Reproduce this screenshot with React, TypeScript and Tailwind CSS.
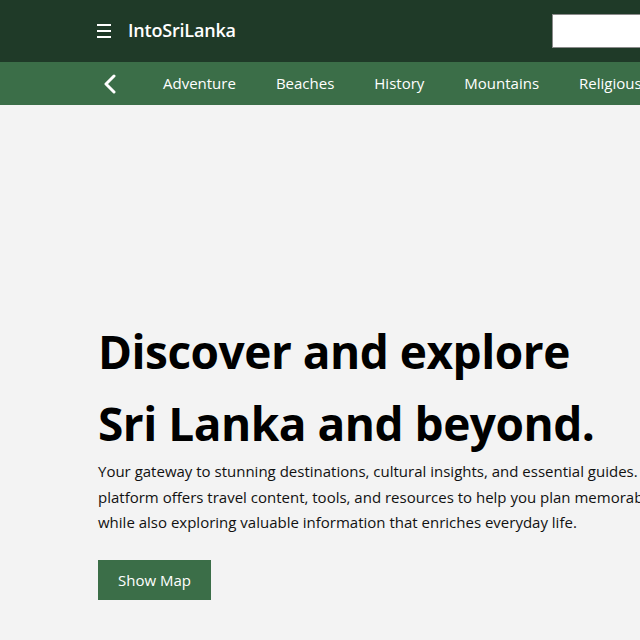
import React from 'react';

const categories = ['Adventure', 'Beaches', 'History', 'Mountains', 'Religious', 'Wildlife'];

export default function App() {
    return (
        <div className="w-[640px] h-[640px] overflow-hidden bg-[#f3f3f3] font-['Open_Sans',sans-serif]">
            <div className="w-[900px]">
                {/* Top bar */}
                <header className="h-[62px] bg-[#1f3a28] flex items-center pl-[97px]">
                    <button className="flex flex-col gap-[4px] w-[14px]">
                        <span className="block h-[2px] bg-white" />
                        <span className="block h-[2px] bg-white" />
                        <span className="block h-[2px] bg-white" />
                    </button>
                    <span className="ml-[17px] -mt-[2px] text-white text-[18px] font-semibold tracking-[-0.2px]">IntoSriLanka</span>
                    <input className="ml-[316px] h-[34px] w-[300px] bg-white border border-[#8a8a8a]" />
                </header>

                {/* Category nav */}
                <nav className="h-[43px] bg-[#3b6e48] flex items-center pl-[103px] text-white text-[15px]">
                    <svg width="14" height="20" viewBox="0 0 14 20" fill="none" className="mr-[46px]">
                        <path d="M11 2 L3 10 L11 18" stroke="white" strokeWidth="3" strokeLinecap="round" strokeLinejoin="round" />
                    </svg>
                    <div className="flex gap-[40px]">
                        {categories.map((c) => (
                            <span key={c}>{c}</span>
                        ))}
                    </div>
                </nav>

                {/* Hero */}
                <section className="pl-[98px] pt-[210px]">
                    <h1 className="text-[46px] leading-[72px] font-bold text-black tracking-[-0.5px]">
                        Discover and explore
                        <br />
                        Sri Lanka and beyond.
                    </h1>
                    <p className="whitespace-nowrap text-[15px] leading-[25.6px] text-[#111]">
                        Your gateway to stunning destinations, cultural insights, and essential guides. Our
                        <br />
                        platform offers travel content, tools, and resources to help you plan memorable journeys,
                        <br />
                        while also exploring valuable information that enriches everyday life.
                    </p>
                    <button className="mt-[24px] h-[40px] px-[20px] bg-[#3b6e48] text-white text-[15px]">
                        Show Map
                    </button>
                </section>
            </div>
        </div>
    );
}
